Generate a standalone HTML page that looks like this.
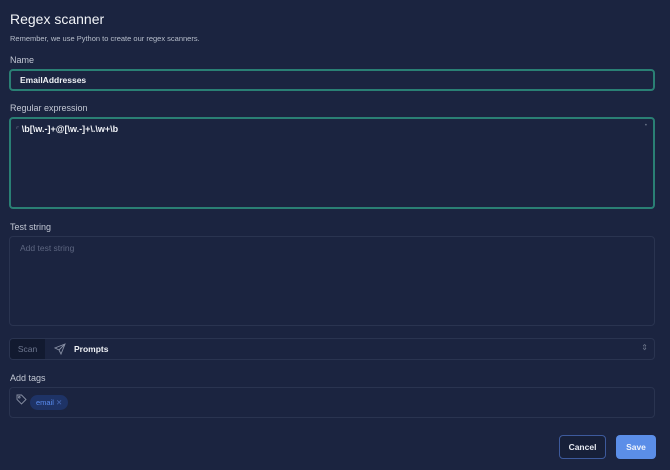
<!DOCTYPE html><html><head><style>
body{margin:0;width:670px;height:470px;background:#1b2440;font-family:"Liberation Sans",sans-serif;color:#e6e9f0;position:relative;overflow:hidden}
.a{position:absolute}
.lbl{font-size:9px;color:#c3c8d4}
.box{position:absolute;left:9px;width:646px;box-sizing:border-box;border:1px solid #2a3450;border-radius:4px;background:#1b2440}
.foc{border:2px solid #2a7f74}
</style></head><body>
<div class="a" style="left:10px;top:11px;font-size:14px;color:#f2f4f8">Regex scanner</div>
<div class="a" style="left:10px;top:34px;font-size:7.5px;color:#b8bfcc">Remember, we use Python to create our regex scanners.</div>
<div class="a lbl" style="left:10px;top:55px">Name</div>
<div class="box foc" style="top:69px;height:22px"><div class="a" style="left:9px;top:4px;font-size:8.5px;font-weight:bold;color:#f0f2f6">EmailAddresses</div></div>
<div class="a lbl" style="left:10px;top:103px">Regular expression</div>
<div class="box foc" style="top:117px;height:92px"><div class="a" style="left:5px;top:5px;font-size:9px;font-weight:bold;color:#f0f2f6"><span style="color:#6b7489;font-size:7px;font-weight:normal">⌜</span> \b[\w.-]+@[\w.-]+\.\w+\b</div><div class="a" style="right:6px;top:4px;font-size:6px;color:#6b7489">•</div></div>
<div class="a lbl" style="left:10px;top:222px">Test string</div>
<div class="box" style="top:236px;height:90px"><div class="a" style="left:10px;top:6px;font-size:8.5px;color:#5d6680">Add test string</div></div>
<div class="box" style="top:338px;height:22px">
<div class="a" style="left:0;top:0;width:35px;height:20px;background:#121a30;border-radius:3px 0 0 3px;font-size:8.5px;color:#6e7790;line-height:20px;text-align:center">Scan</div>
<svg class="a" style="left:44px;top:4px" width="12" height="12" viewBox="0 0 12 12" fill="none" stroke="#8890a4" stroke-width="0.9"><path d="M11 1L1 5l4 2 2 4z M11 1L5 7"/></svg>
<div class="a" style="left:64px;top:5px;font-size:8.5px;font-weight:bold;color:#f0f2f6">Prompts</div>
<div class="a" style="right:6px;top:4px;font-size:8px;color:#6b7489">⇕</div></div>
<div class="a lbl" style="left:10px;top:373px">Add tags</div>
<div class="box" style="top:387px;height:31px">
<svg class="a" style="left:6px;top:6px" width="11" height="11" viewBox="0 0 11 11" fill="none" stroke="#8890a4" stroke-width="0.9"><path d="M1 1h4.5l4.5 4.5-4.5 4.5L1 5.5z"/><circle cx="3.3" cy="3.3" r="0.8"/></svg>
<div class="a" style="left:20px;top:7px;height:15px;padding:0 6px;border-radius:8px;background:#1e3366;font-size:7.5px;line-height:15px;color:#5a8cf0">email <span style="color:#4a6cb8">✕</span></div></div>
<div class="a" style="left:559px;top:435px;width:47px;height:24px;box-sizing:border-box;border:1px solid #3d5a9c;border-radius:4px;background:#172039;font-size:8.5px;font-weight:bold;line-height:22px;text-align:center;color:#e8ebf2">Cancel</div>
<div class="a" style="left:616px;top:435px;width:40px;height:24px;border-radius:4px;background:#5b8ee8;font-size:8.5px;font-weight:bold;line-height:24px;text-align:center;color:#eef3fc">Save</div>
</body></html>
